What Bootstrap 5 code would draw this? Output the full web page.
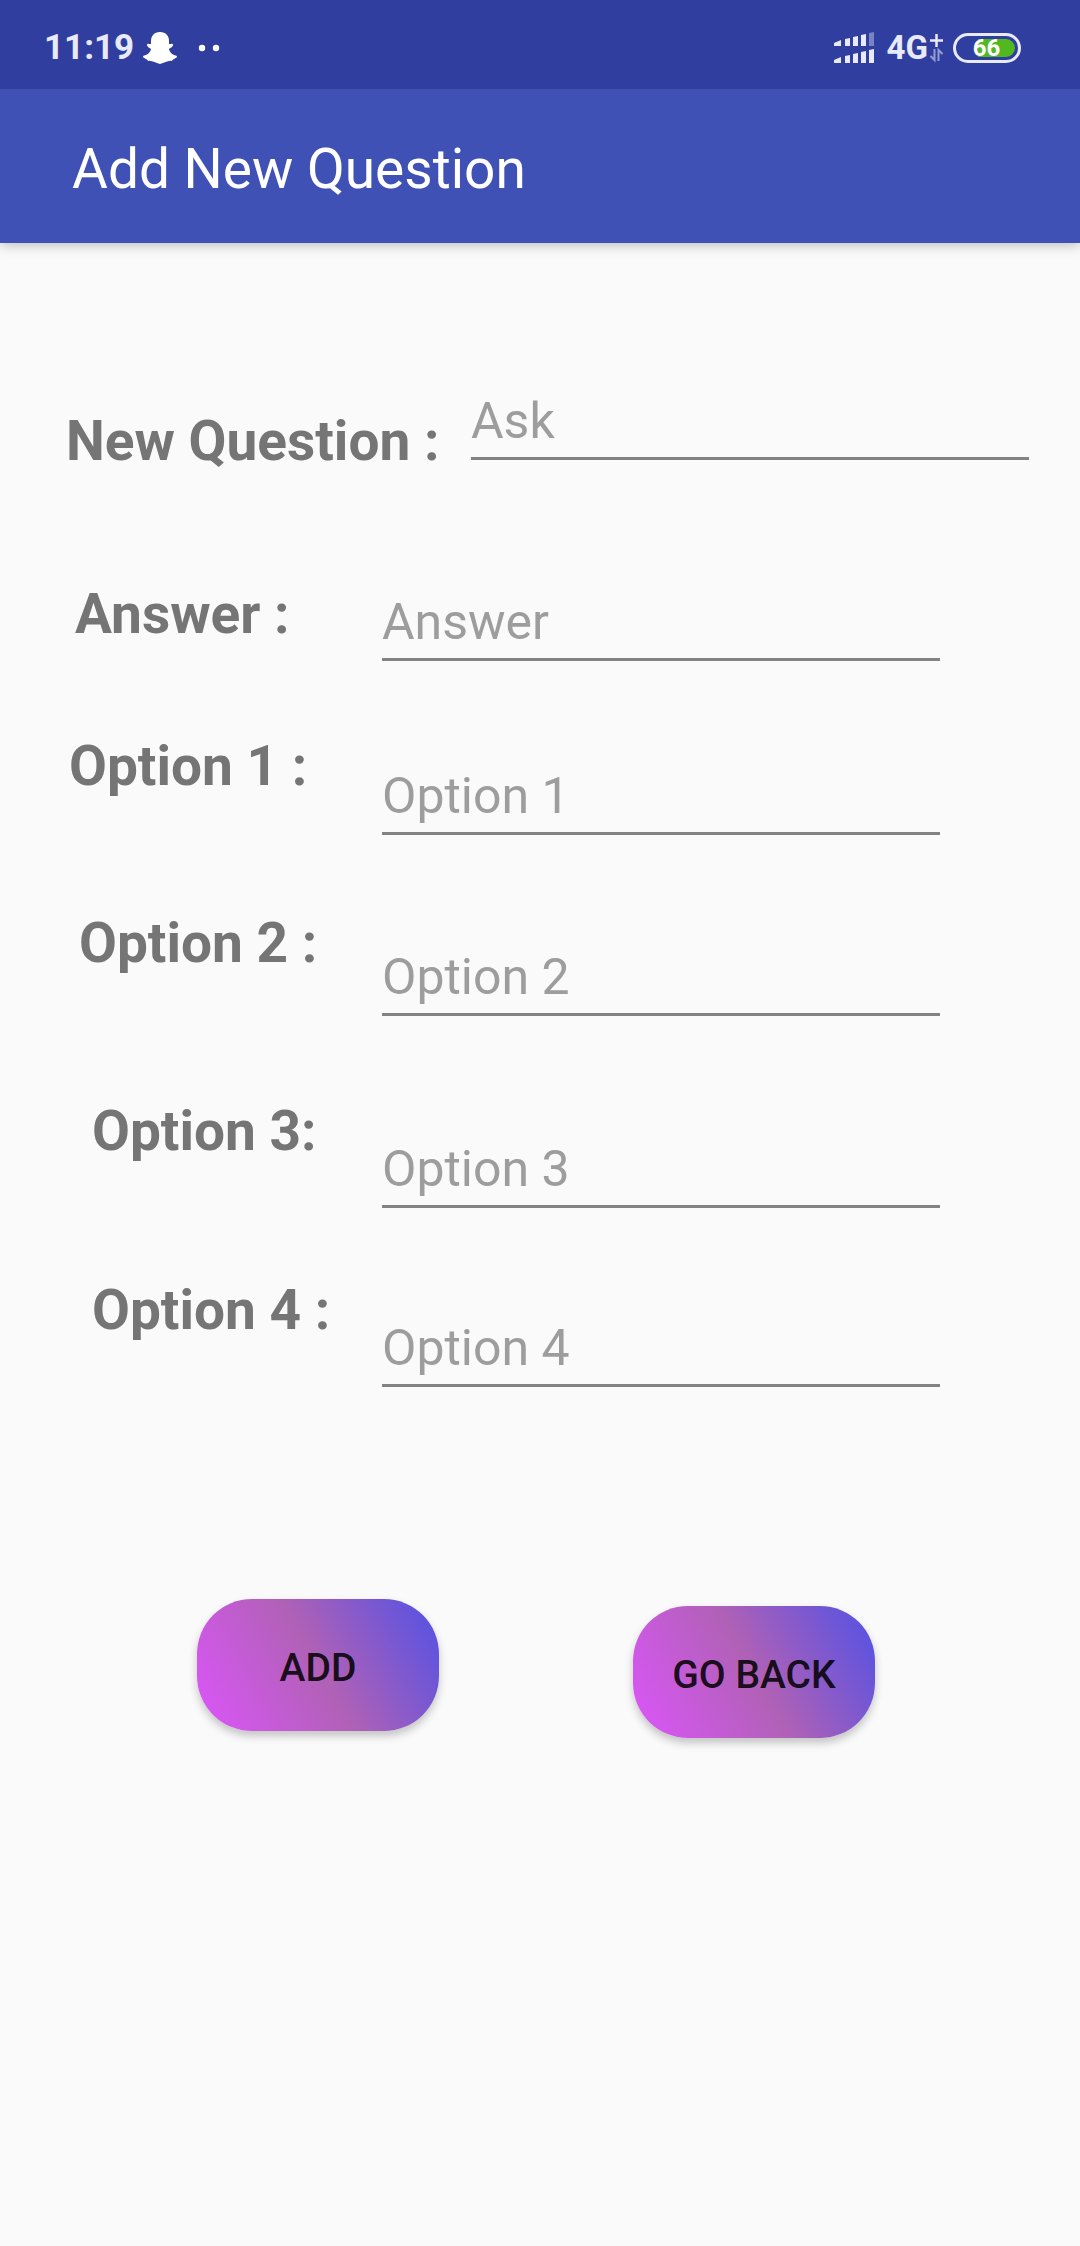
<!DOCTYPE html>
<html lang="en">
<head>
<meta charset="utf-8">
<meta name="viewport" content="width=device-width, initial-scale=1">
<title>Add New Question</title>
<link href="https://cdn.jsdelivr.net/npm/bootstrap@5.3.0/dist/css/bootstrap.min.css" rel="stylesheet">
<style>
  body { background: #fafafa; font-family: Roboto, "Noto Sans", sans-serif; }
  .status-bar { height: 89px; padding: 6px 59px 0 44px; background: #303f9f; color: #e8eaf9; }
  .clock { font-size: 35px; line-height: 40px; }
  .net-type { font-size: 33px; line-height: 40px; margin-left: 12px; }
  .notice-dots { margin-left: 19px; }
  .app-bar { height: 154px; padding: 6px 72px 0; background: #3f51b5; }
  .page-head { box-shadow: 0 2px 12px rgba(0,0,0,.25); }
  .app-title { font-size: 55px; line-height: 64px; color: #fff; }
  .battery { width: 68px; height: 30px; margin-left: 9px; }
  .battery-level { font-size: 24px; line-height: 30px; color: #fff; padding-right: 1px; }

  .question-form { padding-top: 149px; }
  .field-label { flex: 0 0 382px; font-size: 55px; line-height: 64px; font-weight: 700; color: #757575; }
  .field-input.form-control {
    width: auto; min-width: 0; flex: 1 1 0; margin-right: 140px; padding: 0 0 7px;
    font-size: 50px; line-height: 58px; color: #212121; background: transparent;
    border: 0; border-bottom: 3px solid #828282; border-radius: 0; box-shadow: none;
  }
  .field-input::placeholder { color: #9d9d9d; opacity: 1; }
  .field-ask .field-label { flex-basis: 471px; padding: 17px 0 0 66px; }
  .field-ask .field-input { margin-right: 51px; }
  .field-answer { margin-top: 109px; }
  .field-answer .field-label { padding-left: 75px; }
  .field-answer .field-input { margin-top: 11px; }
  .field-one { margin-top: 73px; }
  .field-one .field-label { padding-left: 69px; }
  .field-one .field-input { margin-top: 33px; }
  .field-two { margin-top: 76px; }
  .field-two .field-label { padding-left: 79px; }
  .field-two .field-input { margin-top: 37px; }
  .field-three { margin-top: 83px; }
  .field-four { margin-top: 70px; }
  .field-three .field-label, .field-four .field-label { padding-left: 92px; }
  .field-three .field-input, .field-four .field-input { margin-top: 41px; }

  .form-actions { padding: 212px 205px 60px 197px; }
  .pill-btn.btn {
    width: 242px; height: 132px; padding: 5px 0 0; border: 0; border-radius: 55px;
    font-size: 39px; line-height: 46px; font-weight: 500; color: rgba(0,0,0,.87);
    background: linear-gradient(61deg, #dc55fa, #b061b6, #5151e5);
    box-shadow: 0 5px 8px rgba(0,0,0,.22);
  }
  .go-back { margin-top: 7px; }
</style>
</head>
<body>
<header class="page-head">
  <div class="status-bar d-flex align-items-center">
    <span class="clock fw-bold">11:19</span>
    <svg class="ms-2" width="36" height="34" viewBox="0 0 36 34" fill="#fff" aria-hidden="true"><path d="M18 1c6 0 9 4 9 9v3c2 0 4-1 4 1s-3 3-4 4c1 4 4 6 8 7 0 3-4 2-5 5-4-1-7 2-12 3-5-1-8-4-12-3-1-3-5-2-5-5 4-1 7-3 8-7-1-1-4-2-4-4s2-1 4-1v-3c0-5 3-9 9-9z"/></svg>
    <svg class="notice-dots" width="24" height="8" viewBox="0 0 24 8" fill="#fff" aria-hidden="true"><circle cx="5" cy="4" r="3.2"/><circle cx="19" cy="4" r="3.2"/></svg>
    <svg class="ms-auto" width="42" height="32" viewBox="0 0 42 32" fill="#e8eaf9" aria-hidden="true">
      <path d="M1 11l7-3v6H1zM12 7l5-1v8h-5zM20 5l5-1v10h-5zM28 3l5-1v12h-5zM1 28l7-3v6H1zM12 24l5-1v8h-5zM20 22l5-1v10h-5zM28 20l5-1v12h-5zM36 18l5-1v14h-5z"/><path d="M36 1l5-1v14h-5z" opacity=".4"/></svg>
    <span class="net-type fw-bold">4G</span>
    <svg width="16" height="30" viewBox="0 0 16 30" fill="none" stroke="#e8eaf9" aria-hidden="true"><path d="M8.500 1v13M2 7.500h13" stroke-width="2.500"/><path d="M6.500 16v11l-4-4M10.500 28V17l4 4" stroke-width="2" opacity=".55"/></svg>
    <div class="battery position-relative d-flex align-items-center justify-content-center">
      <svg class="position-absolute top-0 start-0" width="68" height="30" viewBox="0 0 68 30" aria-hidden="true"><rect x="1.500" y="1.500" width="65" height="27" rx="13.500" fill="none" stroke="#e8eaf9" stroke-width="3"/><path d="M25 6h28a9 9 0 0 1 0 18H25z" fill="#52b820"/></svg>
      <span class="battery-level position-relative fw-bold">66</span>
    </div>
  </div>
  <div class="app-bar d-flex align-items-center">
    <h1 class="app-title fw-normal mb-0">Add New Question</h1>
  </div>
</header>
<main>
  <form class="question-form">
    <div class="field-ask d-flex align-items-start">
      <label class="field-label" for="ask">New Question :</label>
      <input class="field-input form-control" id="ask" type="text" placeholder="Ask">
    </div>
    <div class="field-answer d-flex align-items-start">
      <label class="field-label" for="answer">Answer :</label>
      <input class="field-input form-control" id="answer" type="text" placeholder="Answer">
    </div>
    <div class="field-one d-flex align-items-start">
      <label class="field-label" for="option1">Option 1 :</label>
      <input class="field-input form-control" id="option1" type="text" placeholder="Option 1">
    </div>
    <div class="field-two d-flex align-items-start">
      <label class="field-label" for="option2">Option 2 :</label>
      <input class="field-input form-control" id="option2" type="text" placeholder="Option 2">
    </div>
    <div class="field-three d-flex align-items-start">
      <label class="field-label" for="option3">Option 3:</label>
      <input class="field-input form-control" id="option3" type="text" placeholder="Option 3">
    </div>
    <div class="field-four d-flex align-items-start">
      <label class="field-label" for="option4">Option 4 :</label>
      <input class="field-input form-control" id="option4" type="text" placeholder="Option 4">
    </div>
    <div class="form-actions d-flex justify-content-between align-items-start">
      <button class="pill-btn btn" type="submit">ADD</button>
      <button class="pill-btn go-back btn" type="button">GO BACK</button>
    </div>
  </form>
</main>
<script src="https://cdn.jsdelivr.net/npm/bootstrap@5.3.0/dist/js/bootstrap.bundle.min.js"></script>
</body>
</html>
